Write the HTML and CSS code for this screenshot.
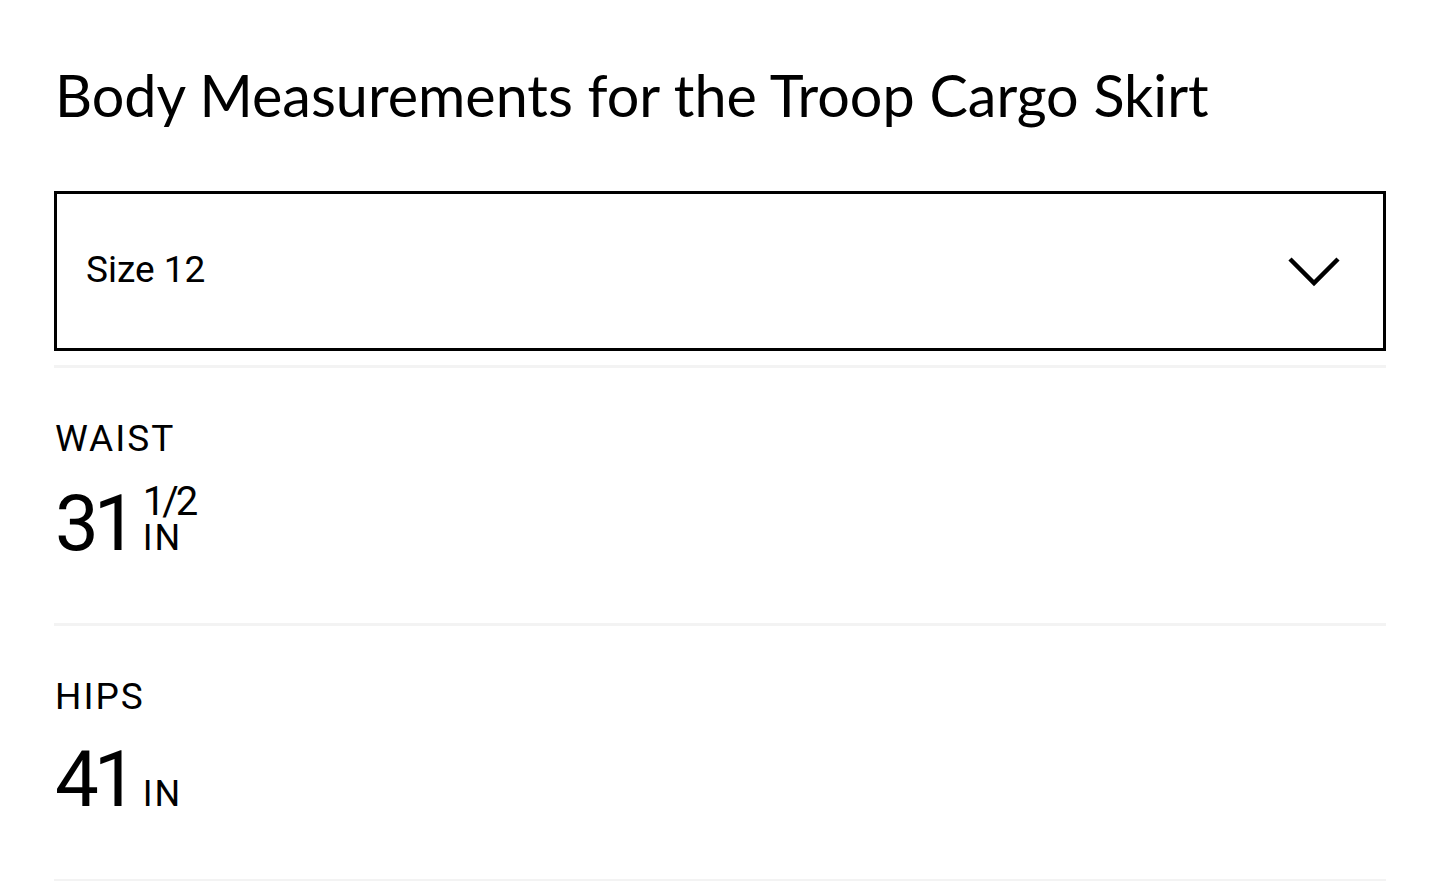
FILE: index.html
```html
<!DOCTYPE html>
<html>
<head>
    <meta charset="UTF-8">
    <title>Body Measurements</title>
    <link rel="stylesheet" href="styles.css">
</head>
<body>
    <div class="container">
        <h1 class="title">Body Measurements for the Troop Cargo Skirt</h1>

        <div class="size-select">
            <span class="size-label">Size 12</span>
            <svg class="chevron" width="54" height="32" viewBox="0 0 54 32">
                <polyline points="3,4 27,28 51,4" fill="none" stroke="#000" stroke-width="4.5"/>
            </svg>
        </div>

        <div class="measure first">
            <div class="measure-name">WAIST</div>
            <div class="measure-value">
                <span class="num">31</span><span class="frac"><span class="frac-top">1/2</span><span class="frac-unit">IN</span></span>
            </div>
        </div>

        <div class="measure">
            <div class="measure-name">HIPS</div>
            <div class="measure-value">
                <span class="num">41</span><span class="unit">IN</span>
            </div>
        </div>
    </div>
</body>
</html>
```

FILE: styles.css
```css
body {
    margin: 0;
    background-color: #fff;
    color: #000;
    font-family: Roboto, "Liberation Sans", sans-serif;
}
.container {
    width: 1332px;
    margin-left: 54px;
    padding-top: 60px;
}
.title {
    font-family: Lato, "Open Sans", sans-serif;
    font-weight: 400;
    font-size: 57.5px;
    line-height: 1.2;
    margin: 0 0 62px 1px;
}
.size-select {
    height: 154px;
    border: 3px solid #000;
    display: flex;
    align-items: center;
    justify-content: space-between;
    padding: 0 42px 0 29px;
}
.size-label {
    font-size: 37px;
    margin-top: -4px;
}
.chevron {
    display: block;
}
.measure {
    border-bottom: 3px solid #f3f3f3;
    padding: 52px 0 60px 1px;
}
.measure.first {
    border-top: 3px solid #f3f3f3;
    margin-top: 14px;
}
.measure-name {
    font-size: 37px;
    line-height: 1;
    letter-spacing: 2px;
}
.measure-value {
    margin-top: 26px;
    font-size: 78px;
    line-height: 1;
}
.num {
    letter-spacing: -5px;
    margin-right: 10px;
}
.frac {
    display: inline-block;
    vertical-align: baseline;
}
.frac-top {
    display: block;
    font-size: 40px;
    line-height: 38px;
    letter-spacing: -3px;
}
.frac-unit,
.unit {
    display: block;
    font-size: 36px;
    line-height: 34px;
    letter-spacing: 2px;
}
.unit {
    display: inline;
}
```
